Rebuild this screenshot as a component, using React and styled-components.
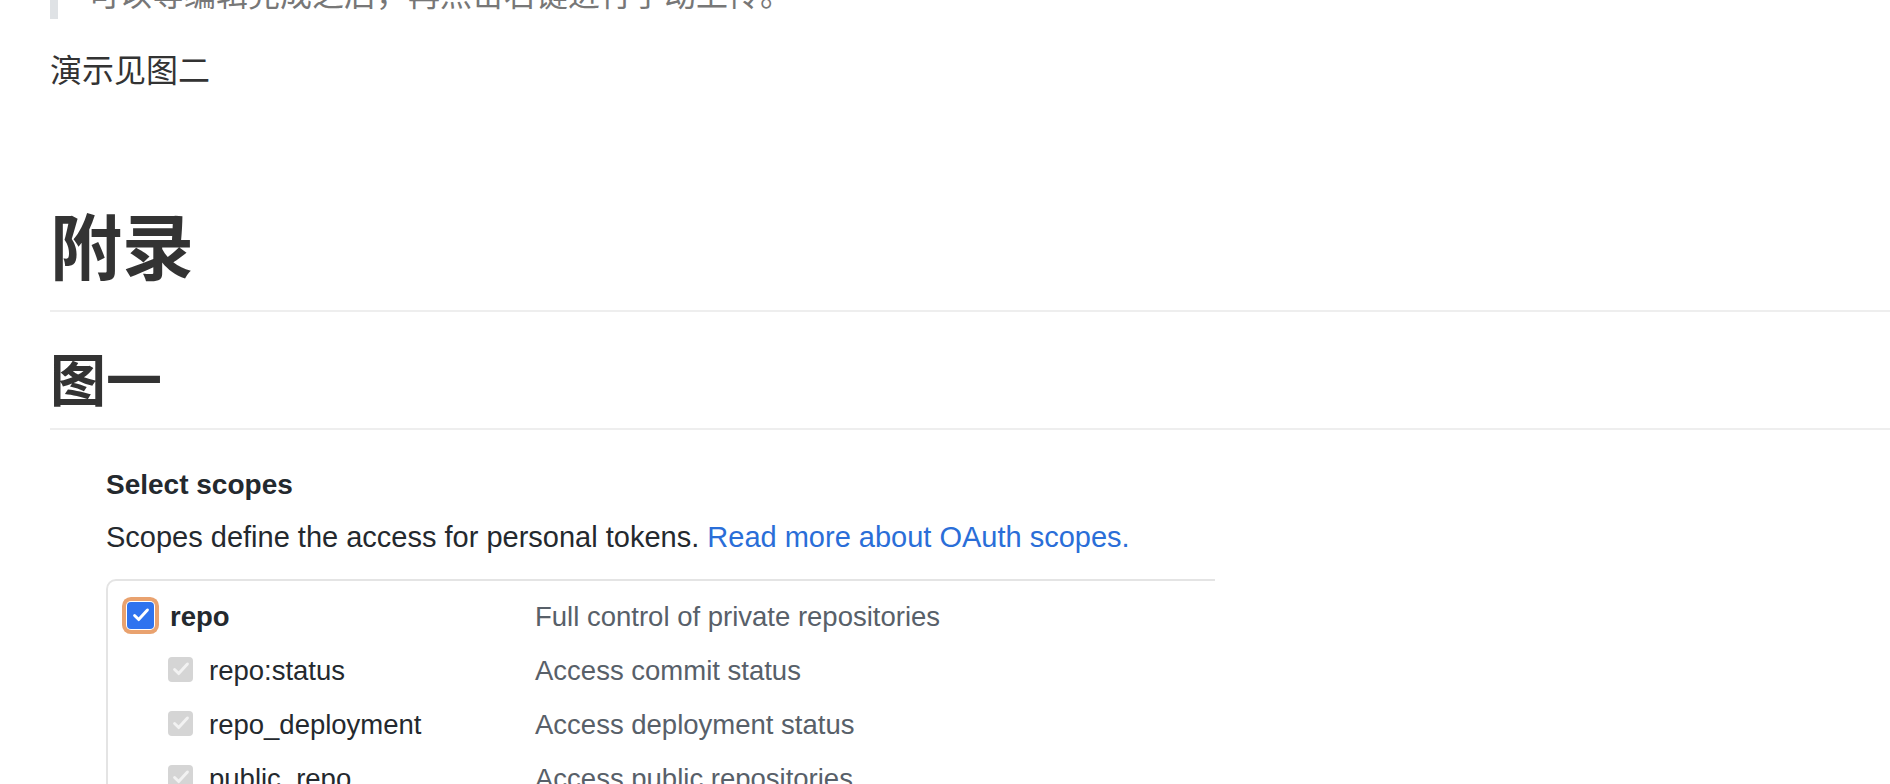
import styled, { createGlobalStyle } from "styled-components";

const GlobalStyle = createGlobalStyle`
  * {
    box-sizing: border-box;
  }

  body {
    margin: 0;
    background: #fff;
    overflow: hidden;
  }
`;

const scopes = [
  { name: "repo", desc: "Full control of private repositories", main: true },
  { name: "repo:status", desc: "Access commit status" },
  { name: "repo_deployment", desc: "Access deployment status" },
  { name: "public_repo", desc: "Access public repositories" },
];

function Check({ main }) {
  return (
    <CheckBox $main={main}>
      <svg width="22" height="22" viewBox="0 0 24 24" fill="none">
        <path
          d="M5 12.5l4.5 4.5 9.5-10.5"
          stroke={main ? "#fff" : "#f2f2f2"}
          strokeWidth="3.2"
          strokeLinecap="round"
          strokeLinejoin="round"
        />
      </svg>
    </CheckBox>
  );
}

function App() {
  return (
    <>
      <GlobalStyle />
      <Article>
        <Quote>
          <p>可以等编辑完成之后，再点击右键进行手动上传。</p>
        </Quote>
        <Para>演示见图二</Para>
        <H1>附录</H1>
        <H2>图一</H2>

        <Figure>
          <ScopeTitle>Select scopes</ScopeTitle>
          <ScopeText>
            Scopes define the access for personal tokens.{" "}
            <Link href="#">Read more about OAuth scopes.</Link>
          </ScopeText>
          <ScopeBox>
            {scopes.map((s) => (
              <ScopeRow key={s.name}>
                <ScopeLabel $indent={s.main ? 19 : 60}>
                  <Check main={s.main} />
                  <ScopeName $main={s.main}>{s.name}</ScopeName>
                </ScopeLabel>
                <ScopeDesc>{s.desc}</ScopeDesc>
              </ScopeRow>
            ))}
          </ScopeBox>
        </Figure>
      </Article>
    </>
  );
}

const Article = styled.main`
  padding-left: 50px;
  font-family: "Open Sans", "Noto Sans CJK SC", sans-serif;
  color: #333;
  font-size: 32px;
`;

const Quote = styled.blockquote`
  margin: -32px 0 0;
  padding: 0 0 0 30px;
  border-left: 8px solid #dfe2e5;
  color: #777;

  p {
    margin: 0;
    line-height: 51px;
  }
`;

const Para = styled.p`
  margin: 25px 0 0;
  line-height: 51px;
`;

const H1 = styled.h1`
  margin: 108px 0 0;
  font-size: 72px;
  line-height: 86px;
  font-weight: 700;
  padding-bottom: 21px;
  border-bottom: 2px solid #eee;
`;

const H2 = styled.h2`
  margin: 33px 0 0;
  font-size: 56px;
  line-height: 68px;
  font-weight: 700;
  padding-bottom: 15px;
  border-bottom: 2px solid #eee;
`;

const Figure = styled.div`
  margin: 35px 0 0 56px;
  width: 1109px;
  overflow: hidden;
  font-family: "Liberation Sans", Arial, sans-serif;
  font-size: 28px;
  color: #24292e;
`;

const ScopeTitle = styled.div`
  font-weight: 700;
  line-height: 40px;
`;

const ScopeText = styled.p`
  margin: 12px 0 0;
  font-size: 29px;
  line-height: 40px;
`;

const Link = styled.a`
  color: #2a6ed8;
  text-decoration: none;
`;

const ScopeBox = styled.div`
  margin-top: 22px;
  width: 1300px;
  border: 2px solid #e4e4e4;
  border-radius: 10px 10px 0 0;
  padding-top: 9px;
  padding-bottom: 20px;
  font-size: 27.5px;
`;

const ScopeRow = styled.div`
  display: grid;
  grid-template-columns: 427px 1fr;
  height: 54px;
  align-items: center;
  line-height: 54px;
`;

const ScopeLabel = styled.div`
  display: flex;
  align-items: center;
  gap: 16px;
  padding-left: ${(p) => p.$indent}px;
`;

const CheckBox = styled.span`
  display: inline-flex;
  align-items: center;
  justify-content: center;
  flex: none;
  width: ${(p) => (p.$main ? 27 : 25)}px;
  height: ${(p) => (p.$main ? 27 : 25)}px;
  margin-top: -4px;
  border-radius: 4px;
  background: ${(p) => (p.$main ? "#2f73ef" : "#d5d5d5")};
  box-shadow: ${(p) =>
    p.$main ? "0 0 0 1px #fff, 0 0 0 5px #e9a26f" : "none"};
`;

const ScopeName = styled.span`
  font-weight: ${(p) => (p.$main ? 700 : 400)};
  color: #24292e;
`;

const ScopeDesc = styled.span`
  color: #586069;
`;

export default App;
